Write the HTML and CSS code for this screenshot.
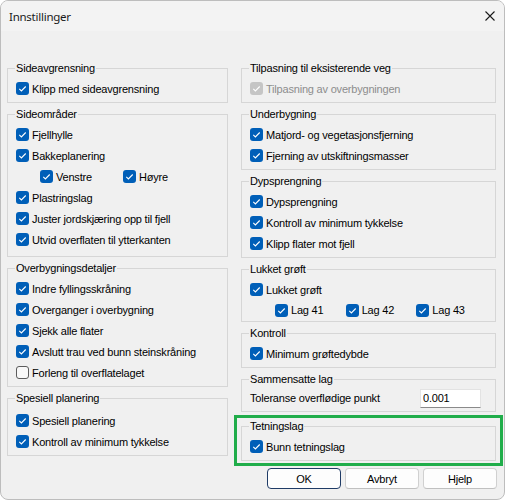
FILE: index.html
```html
<!DOCTYPE html>
<html lang="no">
<head>
<meta charset="utf-8">
<title>Innstillinger</title>
<link rel="stylesheet" href="styles.css">
</head>
<body>
<div class="window">
  <div class="titlebar">
    <span class="title">Innstillinger</span>
    <svg class="close" width="10" height="10" viewBox="0 0 10 10"><path d="M0.5 0.5 L9.5 9.5 M9.5 0.5 L0.5 9.5" stroke="#1a1a1a" stroke-width="1.1" fill="none"/></svg>
  </div>
  <div class="body">
    <div class="col col-left">
      <fieldset class="group">
        <legend>Sideavgrensning</legend>
        <div class="row"><span class="cb on"><svg viewBox="0 0 13 13"><path d="M3.3 6.8 L5.4 8.9 L9.7 4.5"/></svg></span>Klipp med sideavgrensning</div>
      </fieldset>
      <fieldset class="group g-side">
        <legend>Sideområder</legend>
        <div class="row"><span class="cb on"><svg viewBox="0 0 13 13"><path d="M3.3 6.8 L5.4 8.9 L9.7 4.5"/></svg></span>Fjellhylle</div>
        <div class="row"><span class="cb on"><svg viewBox="0 0 13 13"><path d="M3.3 6.8 L5.4 8.9 L9.7 4.5"/></svg></span>Bakkeplanering</div>
        <div class="sub sub-lr">
          <div class="row item"><span class="cb on"><svg viewBox="0 0 13 13"><path d="M3.3 6.8 L5.4 8.9 L9.7 4.5"/></svg></span>Venstre</div>
          <div class="row item"><span class="cb on"><svg viewBox="0 0 13 13"><path d="M3.3 6.8 L5.4 8.9 L9.7 4.5"/></svg></span>Høyre</div>
        </div>
        <div class="row"><span class="cb on"><svg viewBox="0 0 13 13"><path d="M3.3 6.8 L5.4 8.9 L9.7 4.5"/></svg></span>Plastringslag</div>
        <div class="row"><span class="cb on"><svg viewBox="0 0 13 13"><path d="M3.3 6.8 L5.4 8.9 L9.7 4.5"/></svg></span>Juster jordskjæring opp til fjell</div>
        <div class="row"><span class="cb on"><svg viewBox="0 0 13 13"><path d="M3.3 6.8 L5.4 8.9 L9.7 4.5"/></svg></span>Utvid overflaten til ytterkanten</div>
      </fieldset>
      <fieldset class="group">
        <legend>Overbygningsdetaljer</legend>
        <div class="row"><span class="cb on"><svg viewBox="0 0 13 13"><path d="M3.3 6.8 L5.4 8.9 L9.7 4.5"/></svg></span>Indre fyllingsskråning</div>
        <div class="row"><span class="cb on"><svg viewBox="0 0 13 13"><path d="M3.3 6.8 L5.4 8.9 L9.7 4.5"/></svg></span>Overganger i overbygning</div>
        <div class="row"><span class="cb on"><svg viewBox="0 0 13 13"><path d="M3.3 6.8 L5.4 8.9 L9.7 4.5"/></svg></span>Sjekk alle flater</div>
        <div class="row"><span class="cb on"><svg viewBox="0 0 13 13"><path d="M3.3 6.8 L5.4 8.9 L9.7 4.5"/></svg></span>Avslutt trau ved bunn steinskråning</div>
        <div class="row"><span class="cb off"></span>Forleng til overflatelaget</div>
      </fieldset>
      <fieldset class="group g-spes">
        <legend>Spesiell planering</legend>
        <div class="row"><span class="cb on"><svg viewBox="0 0 13 13"><path d="M3.3 6.8 L5.4 8.9 L9.7 4.5"/></svg></span>Spesiell planering</div>
        <div class="row"><span class="cb on"><svg viewBox="0 0 13 13"><path d="M3.3 6.8 L5.4 8.9 L9.7 4.5"/></svg></span>Kontroll av minimum tykkelse</div>
      </fieldset>
    </div>
    <div class="col col-right">
      <fieldset class="group">
        <legend>Tilpasning til eksisterende veg</legend>
        <div class="row disabled"><span class="cb dis"><svg viewBox="0 0 13 13"><path d="M3.3 6.8 L5.4 8.9 L9.7 4.5"/></svg></span>Tilpasning av overbygningen</div>
      </fieldset>
      <fieldset class="group">
        <legend>Underbygning</legend>
        <div class="row"><span class="cb on"><svg viewBox="0 0 13 13"><path d="M3.3 6.8 L5.4 8.9 L9.7 4.5"/></svg></span>Matjord- og vegetasjonsfjerning</div>
        <div class="row"><span class="cb on"><svg viewBox="0 0 13 13"><path d="M3.3 6.8 L5.4 8.9 L9.7 4.5"/></svg></span>Fjerning av utskiftningsmasser</div>
      </fieldset>
      <fieldset class="group">
        <legend>Dypsprengning</legend>
        <div class="row"><span class="cb on"><svg viewBox="0 0 13 13"><path d="M3.3 6.8 L5.4 8.9 L9.7 4.5"/></svg></span>Dypsprengning</div>
        <div class="row"><span class="cb on"><svg viewBox="0 0 13 13"><path d="M3.3 6.8 L5.4 8.9 L9.7 4.5"/></svg></span>Kontroll av minimum tykkelse</div>
        <div class="row"><span class="cb on"><svg viewBox="0 0 13 13"><path d="M3.3 6.8 L5.4 8.9 L9.7 4.5"/></svg></span>Klipp flater mot fjell</div>
      </fieldset>
      <fieldset class="group g-lukket">
        <legend>Lukket grøft</legend>
        <div class="row"><span class="cb on"><svg viewBox="0 0 13 13"><path d="M3.3 6.8 L5.4 8.9 L9.7 4.5"/></svg></span>Lukket grøft</div>
        <div class="sub sub-lag">
          <div class="row item"><span class="cb on"><svg viewBox="0 0 13 13"><path d="M3.3 6.8 L5.4 8.9 L9.7 4.5"/></svg></span>Lag 41</div>
          <div class="row item"><span class="cb on"><svg viewBox="0 0 13 13"><path d="M3.3 6.8 L5.4 8.9 L9.7 4.5"/></svg></span>Lag 42</div>
          <div class="row item"><span class="cb on"><svg viewBox="0 0 13 13"><path d="M3.3 6.8 L5.4 8.9 L9.7 4.5"/></svg></span>Lag 43</div>
        </div>
      </fieldset>
      <fieldset class="group">
        <legend>Kontroll</legend>
        <div class="row"><span class="cb on"><svg viewBox="0 0 13 13"><path d="M3.3 6.8 L5.4 8.9 L9.7 4.5"/></svg></span>Minimum grøftedybde</div>
      </fieldset>
      <fieldset class="group g-samm">
        <legend>Sammensatte lag</legend>
        <div class="row tol"><span>Toleranse overflødige punkt</span><input class="num" type="text" value="0.001"></div>
      </fieldset>
      <div class="highlight">
        <fieldset class="group">
          <legend>Tetningslag</legend>
          <div class="row"><span class="cb on"><svg viewBox="0 0 13 13"><path d="M3.3 6.8 L5.4 8.9 L9.7 4.5"/></svg></span>Bunn tetningslag</div>
        </fieldset>
      </div>
    </div>
  </div>
  <div class="footer">
    <button class="btn default" type="button">OK</button>
    <button class="btn" type="button">Avbryt</button>
    <button class="btn" type="button">Hjelp</button>
  </div>
</div>
</body>
</html>
```
FILE: styles.css
```css
* { box-sizing: border-box; }

html, body {
  margin: 0;
  padding: 0;
}

body {
  width: 505px;
  height: 500px;
  background: #ffffff;
  font-family: "Liberation Sans", Arial, sans-serif;
  font-size: 11px;
  letter-spacing: -0.2px;
  color: #000000;
}

.window {
  width: 505px;
  height: 500px;
  border: 1px solid #bdbdbd;
  border-radius: 8px;
  background: #f0f0f0;
  overflow: hidden;
  display: flex;
  flex-direction: column;
}

.titlebar {
  height: 30px;
  flex: none;
  background: #f3f3f3;
  display: flex;
  align-items: center;
  justify-content: space-between;
  padding: 0 9px 0 8px;
}

.title {
  font-family: "Noto Sans", "Open Sans", sans-serif;
  font-size: 11.5px;
  letter-spacing: -0.25px;
  color: #1a1a1a;
}

.close {
  display: block;
  margin-top: -1px;
}

.body {
  display: flex;
  gap: 13px;
  padding: 30px 0 0 6px;
}

.col {
  display: flex;
  flex-direction: column;
}

.col-left { width: 221px; }
.col-right { width: 255px; }

.group {
  margin: 0;
  min-width: 0;
  border: 1px solid #d6d6d6;
  padding: 3px 8px 3px;
}

.group + .group { margin-top: 4px; }

.group legend {
  padding: 0 1px;
  margin-left: -1px;
  line-height: 14px;
}

.g-side { padding-bottom: 6px; }
.g-spes { padding-top: 5px; }
.g-lukket { padding-bottom: 1px; }
.g-samm { margin-top: 9px; padding-top: 2px; }

.row {
  height: 21px;
  display: flex;
  align-items: center;
  gap: 3px;
  white-space: nowrap;
}

.row.disabled { color: #8d8d8d; }

.cb {
  width: 13px;
  height: 13px;
  flex: none;
  border-radius: 3px;
  display: block;
}

.cb svg {
  display: block;
  width: 13px;
  height: 13px;
}

.cb svg path {
  fill: none;
  stroke: #ffffff;
  stroke-width: 1.1;
}

.cb.on { background: #005fb8; }
.cb.dis { background: #c5c5c5; }
.cb.off {
  background: #f8f8f8;
  border: 1px solid #5c5c5c;
}

.sub { display: flex; }
.sub-lr { margin-left: 24px; }
.sub-lr .item:first-child { width: 83px; }
.sub-lag { margin-left: 25px; }
.sub-lag .item { width: 72px; height: 20px; }

.row.tol {
  height: 20px;
  justify-content: space-between;
}

.num {
  width: 61px;
  height: 19px;
  margin: 0 6px 0 0;
  padding: 0 2px;
  border: 1px solid #e3e3e3;
  border-bottom-color: #8a8a8a;
  background: #ffffff;
  font-family: "Liberation Sans", Arial, sans-serif;
  font-size: 11px;
  letter-spacing: -0.2px;
  color: #000000;
  outline: none;
}

.highlight {
  margin: 3px -7px 0;
  border: 3px solid #20ad4a;
  padding: 1px 4px 2px;
}

.footer {
  display: flex;
  justify-content: flex-end;
  gap: 4px;
  padding: 2px 7px 0 0;
}

.btn {
  width: 74px;
  height: 21px;
  padding: 0;
  border: 1px solid #d0d0d0;
  border-bottom-color: #c0c0c0;
  border-radius: 4px;
  background: #fdfdfd;
  font-family: "Liberation Sans", Arial, sans-serif;
  font-size: 11px;
  letter-spacing: -0.2px;
  color: #000000;
}

.btn.default {
  border-color: #1f3b66;
}
```
